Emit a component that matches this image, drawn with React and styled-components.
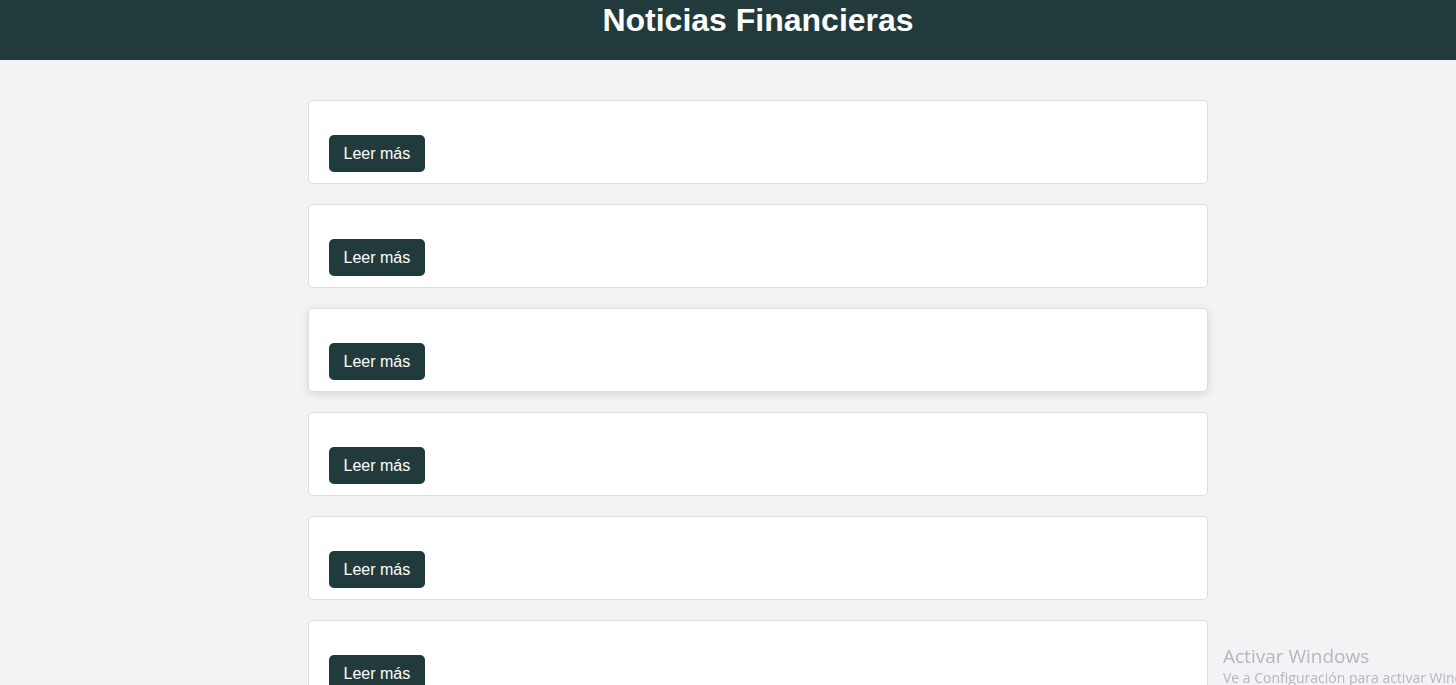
import React from 'react';
import styled, { createGlobalStyle } from 'styled-components';

const GlobalStyle = createGlobalStyle`
  html, body {
    margin: 0;
    padding: 0;
    overflow: hidden;
    background: #f2f3f5;
    font-family: "Liberation Sans", Arial, sans-serif;
  }
`;

const Header = styled.header`
  height: 60px;
  background: #213a3b;
  display: flex;
  justify-content: center;
  padding-left: 60px;
`;

const Title = styled.h1`
  margin: 0;
  padding-top: 2px;
  color: #ffffff;
  font-size: 32px;
  font-weight: bold;
`;

const NewsList = styled.main`
  display: flex;
  flex-direction: column;
  gap: 20px;
  width: 900px;
  margin: 40px auto 0;
  padding-left: 60px;
`;

const NewsCard = styled.article`
  background: #ffffff;
  border: 1px solid #dcdde0;
  border-radius: 5px;
  padding: 20px 20px 11px;
  box-shadow: ${({ $hovered }) => ($hovered ? '0 2px 8px rgba(0, 0, 0, 0.12)' : 'none')};
`;

const ReadMore = styled.button`
  display: inline-block;
  margin-top: 14px;
  height: 37px;
  padding: 0 14.5px;
  border: none;
  border-radius: 5px;
  background: #213a3b;
  color: #ffffff;
  font-family: "Liberation Sans", Arial, sans-serif;
  font-size: 16px;
  line-height: 37px;
  cursor: pointer;
`;

const Watermark = styled.div`
  position: fixed;
  left: 1223px;
  top: 644px;
  white-space: nowrap;
  color: #b4b7bb;
  font-family: "Open Sans", "Noto Sans", sans-serif;
`;

const WatermarkTitle = styled.div`
  font-size: 19px;
  line-height: 24px;
`;

const WatermarkText = styled.div`
  font-size: 14px;
  line-height: 19px;
`;

export default function App() {
  const items = Array.from({ length: 8 }, (_, i) => i);
  return (
    <>
      <GlobalStyle />
      <Header>
        <Title>Noticias Financieras</Title>
      </Header>
      <NewsList>
        {items.map((i) => (
          <NewsCard key={i} $hovered={i === 2}>
            <ReadMore>Leer más</ReadMore>
          </NewsCard>
        ))}
      </NewsList>
      <Watermark>
        <WatermarkTitle>Activar Windows</WatermarkTitle>
        <WatermarkText>Ve a Configuración para activar Windows.</WatermarkText>
      </Watermark>
    </>
  );
}
